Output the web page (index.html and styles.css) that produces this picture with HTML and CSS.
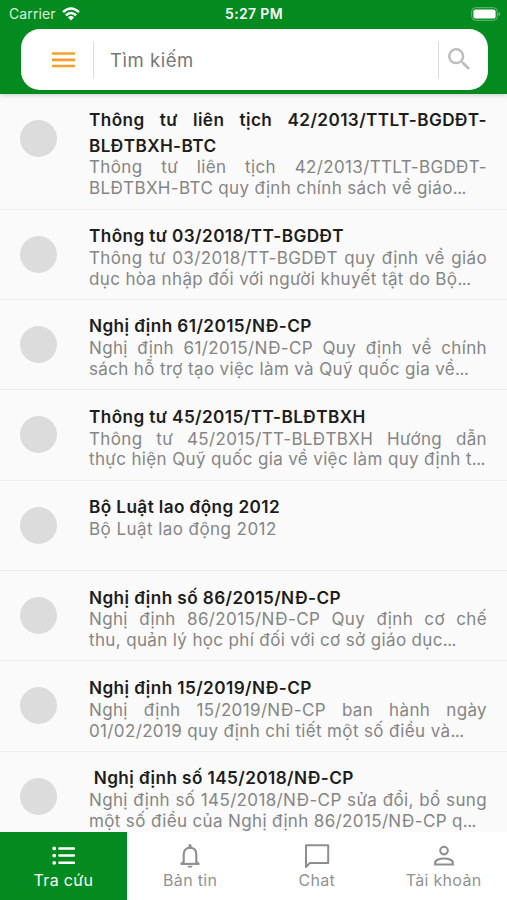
FILE: index.html
```html
<!DOCTYPE html>
<html lang="vi">
<head>
<meta charset="utf-8">
<title>Tra cứu</title>
<link rel="stylesheet" href="styles.css">
</head>
<body>
<div class="app">
  <header class="header">
    <div class="status">
      <div class="carrier">
        <span>Carrier</span>
        <svg class="wifi" viewBox="0 0 18 14" fill="none" stroke="#fff" stroke-width="2.5"><path d="M1 5.1Q9-2.1 17 5.1M3.9 8.2Q9 3.7 14.1 8.2"/><path d="M9 13.6 5.9 10.3Q9 7.9 12.1 10.3Z" fill="#fff" stroke="none"/></svg>
      </div>
      <span class="clock">5:27 PM</span>
      <svg class="battery" viewBox="0 0 30 14"><rect x=".7" y=".7" width="25.6" height="12.6" rx="3.8" fill="none" stroke="#6db879" stroke-width="1"/><rect x="2.4" y="2.4" width="22.2" height="9.2" rx="2.2" fill="#fff"/><path d="M27.6 4.8Q29.4 5.5 29.4 7T27.6 9.2Z" fill="#6db879"/></svg>
    </div>
    <div class="search">
      <svg class="menu" viewBox="0 0 23 16" fill="#f5a02c"><path d="M0 .2h23v2.6H0zM0 6.6h23v2.6H0zM0 12.7h23v2.6H0z"/></svg>
      <span class="rule"></span>
      <span class="placeholder">Tìm kiếm</span>
      <span class="rule"></span>
      <svg class="lens" viewBox="3 3 17.5 17.5" fill="#bdbdbd"><path d="M15.5 14h-.79l-.28-.27A6.47 6.47 0 0 0 16 9.5 6.5 6.5 0 1 0 9.5 16c1.61 0 3.09-.59 4.23-1.57l.27.28v.79l5 4.99L20.49 19l-4.99-5zm-6 0C7.01 14 5 11.99 5 9.5S7.01 5 9.5 5 14 7.01 14 9.5 11.99 14 9.5 14z"/></svg>
    </div>
  </header>
  <main class="list">
    <article class="item tall"><span class="dot"></span><div class="text">
      <h2><span class="full">Thông tư liên tịch 42/2013/TTLT-BGDĐT-</span><span>BLĐTBXH-BTC</span></h2>
      <p><span class="full">Thông tư liên tịch 42/2013/TTLT-BGDĐT-</span><span>BLĐTBXH-BTC quy định chính sách về giáo<i>...</i></span></p></div></article>
    <article class="item"><span class="dot"></span><div class="text">
      <h2>Thông tư 03/2018/TT-BGDĐT</h2>
      <p><span class="full">Thông tư 03/2018/TT-BGDĐT quy định về giáo</span><span>dục hòa nhập đối với người khuyết tật do Bộ<i>...</i></span></p></div></article>
    <article class="item"><span class="dot"></span><div class="text">
      <h2>Nghị định 61/2015/NĐ-CP</h2>
      <p><span class="full">Nghị định 61/2015/NĐ-CP Quy định về chính</span><span>sách hỗ trợ tạo việc làm và Quỹ quốc gia về<i>...</i></span></p></div></article>
    <article class="item"><span class="dot"></span><div class="text">
      <h2>Thông tư 45/2015/TT-BLĐTBXH</h2>
      <p><span class="full">Thông tư 45/2015/TT-BLĐTBXH Hướng dẫn</span><span>thực hiện Quỹ quốc gia về việc làm quy định t<i>...</i></span></p></div></article>
    <article class="item"><span class="dot"></span><div class="text">
      <h2>Bộ Luật lao động 2012</h2>
      <p><span class="short">Bộ Luật lao động 2012</span></p></div></article>
    <article class="item"><span class="dot"></span><div class="text">
      <h2>Nghị định số 86/2015/NĐ-CP</h2>
      <p><span class="full">Nghị định 86/2015/NĐ-CP Quy định cơ chế</span><span>thu, quản lý học phí đối với cơ sở giáo dục<i>...</i></span></p></div></article>
    <article class="item"><span class="dot"></span><div class="text">
      <h2>Nghị định 15/2019/NĐ-CP</h2>
      <p><span class="full">Nghị định 15/2019/NĐ-CP ban hành ngày</span><span>01/02/2019 quy định chi tiết một số điều và<i>...</i></span></p></div></article>
    <article class="item"><span class="dot"></span><div class="text">
      <h2>&nbsp;Nghị định số 145/2018/NĐ-CP</h2>
      <p><span class="full">Nghị định số 145/2018/NĐ-CP sửa đổi, bổ sung</span><span>một số điều của Nghị định 86/2015/NĐ-CP q<i>...</i></span></p></div></article>
  </main>
  <nav class="tabs">
    <a class="tab active"><svg viewBox="0 0 26 26" fill="none" stroke="#fff" stroke-width="2.5" stroke-linecap="round"><path d="M9.4 5.4H23.9M9.4 12.6H23.9M9.4 19.8H23.9"/><path d="M4.2 5.4h.01M4.2 12.6h.01M4.2 19.8h.01" stroke-width="3.8"/></svg><span>Tra cứu</span></a>
    <a class="tab"><svg viewBox="0 0 26 26" fill="none" stroke="#8e8e8e" stroke-width="2.1"><path d="M6.7 20.4V11.6C6.7 7.3 9.2 4.8 13 4.8s6.3 2.5 6.3 6.8v8.8"/><path d="M3.6 20.9H22.4"/><path d="M13 4.5V2.5" stroke-width="3" stroke-linecap="round"/><path d="M10.5 22.7h5a2.5 2 0 0 1-5 0z" fill="#8e8e8e" stroke="none"/><path d="M3.3 20.5l3.3-3v3zM22.7 20.5l-3.3-3v3z" fill="#8e8e8e" stroke="none"/></svg><span>Bản tin</span></a>
    <a class="tab"><svg viewBox="0 0 26 26" fill="none" stroke="#8e8e8e" stroke-width="2" stroke-linejoin="round"><path d="M2 2.3H24.2V20H5.8L2 24Z"/></svg><span>Chat</span></a>
    <a class="tab"><svg viewBox="0 0 26 26" fill="none" stroke="#8e8e8e" stroke-width="2.1"><circle cx="13" cy="7.6" r="3.8"/><path d="M4.2 21.5v-2c0-2.7 4.8-4 8.8-4s8.8 1.3 8.8 4v2Z"/></svg><span>Tài khoản</span></a>
  </nav>
</div>
</body>
</html>
```
FILE: styles.css
```css
* { box-sizing: border-box; }
body { margin: 0; background: #fafafa; font-family: Inter, "Noto Sans", sans-serif; }
svg { display: block; flex: none; }
.app { width: 507px; height: 900px; display: flex; flex-direction: column; overflow: hidden; }
.header { flex: none; height: 93.5px; background: #048b1f; box-shadow: 0 1px 5px rgba(0,0,0,.2); position: relative; }
.status { height: 29px; padding: 0 6px 2px 9px; display: grid; grid-template-columns: 1fr auto 1fr; align-items: center; color: #fff; font-size: 14px; }
.carrier { display: flex; align-items: center; gap: 6px; color: #d9efdc; letter-spacing: .1px; }
.wifi { width: 18px; height: 14px; }
.clock { font-weight: 600; font-size: 14px; letter-spacing: .35px; margin-right: 2px; }
.battery { width: 30px; height: 14px; justify-self: end; }
.search { height: 61px; margin: 0 19.5px 0 20.5px; padding: 0 18px 0 31px; background: #fff; border-radius: 19px; display: flex; align-items: center; }
.menu { width: 23px; height: 16px; }
.rule { width: 1px; height: 38px; background: #dedede; margin-left: 18px; }
.placeholder { flex: 1; margin-left: 16.5px; font-size: 18.5px; letter-spacing: .55px; color: #777; }
.lens { width: 22px; height: 22px; margin: -2px 0 0 9px; }
.search .placeholder + .rule { margin-left: 0; }
.list { flex: 1; min-height: 0; overflow: hidden; }
.item { height: 90.4px; padding: 13.5px 20px 0; display: flex; border-bottom: 1.4px solid #eee; }
.item.tall { height: 116px; }
.dot { flex: none; width: 37px; height: 37px; margin: 12.5px 32px 0 0; border-radius: 50%; background: #dcdcdc; }
.text { width: 398px; white-space: nowrap; }
.text span { display: block; }
.text .full { text-align: justify; text-align-last: justify; white-space: normal; }
.text i { font-style: normal; letter-spacing: -.5px; }
h2 { margin: 0; font-size: 17.2px; font-weight: 630; line-height: 25.6px; letter-spacing: .4px; color: #1d1d1d; }
p { margin: -.8px 0 0; font-size: 17px; line-height: 20.8px; letter-spacing: .36px; color: #858585; }
p .short { letter-spacing: .44px; }
.tabs { flex: none; height: 68.5px; display: grid; grid-template-columns: repeat(4, 1fr); background: #fff; position: relative; }
.tab { display: flex; flex-direction: column; align-items: center; padding-top: 11px; color: #929292; font-size: 16px; letter-spacing: .3px; line-height: 22px; }
.tab svg { width: 26px; height: 26px; }
.tab.active { background: #048b1f; color: #fff; }
```
